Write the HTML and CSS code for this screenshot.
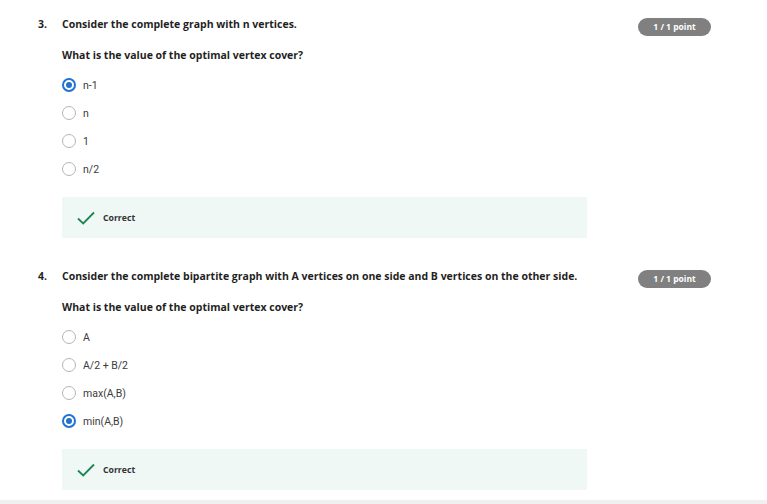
FILE: index.html
```html
<!DOCTYPE html>
<html>
<head>
<meta charset="utf-8">
<link rel="stylesheet" href="styles.css">
</head>
<body>
<div class="page">
  <div class="question">
    <div class="num">3.</div>
    <div class="body">
      <div class="head">
        <div class="title">Consider the complete graph with n vertices.</div>
        <div class="badge">1 / 1 point</div>
      </div>
      <div class="prompt">What is the value of the optimal vertex cover?</div>
      <div class="options">
        <div class="opt"><span class="radio checked"></span><span class="label">n-1</span></div>
        <div class="opt"><span class="radio"></span><span class="label">n</span></div>
        <div class="opt"><span class="radio"></span><span class="label">1</span></div>
        <div class="opt"><span class="radio"></span><span class="label">n/2</span></div>
      </div>
      <div class="feedback">
        <svg class="check" width="18" height="14" viewBox="0 0 18 14"><path d="M1 7.5 L6.2 12.5 L17 1.5" fill="none" stroke="#1f8354" stroke-width="1.8"/></svg>
        <span class="fb-text">Correct</span>
      </div>
    </div>
  </div>
  <div class="question">
    <div class="num">4.</div>
    <div class="body">
      <div class="head">
        <div class="title">Consider the complete bipartite graph with A vertices on one side and B vertices on the other side.</div>
        <div class="badge">1 / 1 point</div>
      </div>
      <div class="prompt">What is the value of the optimal vertex cover?</div>
      <div class="options">
        <div class="opt"><span class="radio"></span><span class="label">A</span></div>
        <div class="opt"><span class="radio"></span><span class="label">A/2 + B/2</span></div>
        <div class="opt"><span class="radio"></span><span class="label">max(A,B)</span></div>
        <div class="opt"><span class="radio checked"></span><span class="label">min(A,B)</span></div>
      </div>
      <div class="feedback">
        <svg class="check" width="18" height="14" viewBox="0 0 18 14"><path d="M1 7.5 L6.2 12.5 L17 1.5" fill="none" stroke="#1f8354" stroke-width="1.8"/></svg>
        <span class="fb-text">Correct</span>
      </div>
    </div>
  </div>
</div>
<div class="footer"></div>
</body>
</html>
```
FILE: styles.css
```css
html, body {
  margin: 0;
  padding: 0;
  background: #ffffff;
}
body {
  width: 767px;
  height: 504px;
  overflow: hidden;
  display: flex;
  flex-direction: column;
}
.page {
  flex: 1;
  padding: 16px 56px 0 38px;
  display: flex;
  flex-direction: column;
  gap: 30px;
}
.question {
  display: flex;
}
.num {
  width: 24px;
  font-family: "Open Sans", sans-serif;
  font-weight: 700;
  font-size: 10.5px;
  line-height: 16px;
  color: #1f1f1f;
}
.body {
  flex: 1;
  display: flex;
  flex-direction: column;
}
.head {
  display: flex;
  justify-content: space-between;
  align-items: flex-start;
}
.title {
  font-family: "Open Sans", sans-serif;
  font-weight: 700;
  font-size: 10.5px;
  line-height: 16px;
  color: #1f1f1f;
}
.badge {
  margin-top: 2px;
  width: 73px;
  height: 18px;
  border-radius: 9px;
  background: #808080;
  color: #ffffff;
  font-family: "Open Sans", sans-serif;
  font-weight: 700;
  font-size: 8.5px;
  line-height: 18px;
  text-align: center;
}
.prompt {
  margin-top: 11px;
  font-family: "Open Sans", sans-serif;
  font-weight: 700;
  font-size: 10.5px;
  line-height: 16px;
  color: #1f1f1f;
}
.options {
  margin-top: 8px;
  display: flex;
  flex-direction: column;
}
.opt {
  height: 28px;
  display: flex;
  align-items: center;
  gap: 7px;
}
.radio {
  width: 14px;
  height: 14px;
  box-sizing: border-box;
  border: 1.5px solid #b5b5b5;
  border-radius: 50%;
  display: flex;
  align-items: center;
  justify-content: center;
}
.radio.checked {
  border: 2px solid #2073d1;
}
.radio.checked::after {
  content: "";
  width: 6px;
  height: 6px;
  border-radius: 50%;
  background: #2073d1;
}
.label {
  font-family: Roboto, "Liberation Sans", sans-serif;
  font-size: 10.5px;
  color: #3b3b3b;
}
.feedback {
  margin-top: 14px;
  width: 525px;
  height: 41px;
  box-sizing: border-box;
  background: #eff8f5;
  display: flex;
  align-items: center;
  padding-left: 15px;
  gap: 8px;
}
.check {
  display: block;
}
.fb-text {
  font-family: "Open Sans", sans-serif;
  font-weight: 700;
  font-size: 8.7px;
  color: #333333;
}
.footer {
  height: 4px;
  background: #f0f0f0;
}
```
